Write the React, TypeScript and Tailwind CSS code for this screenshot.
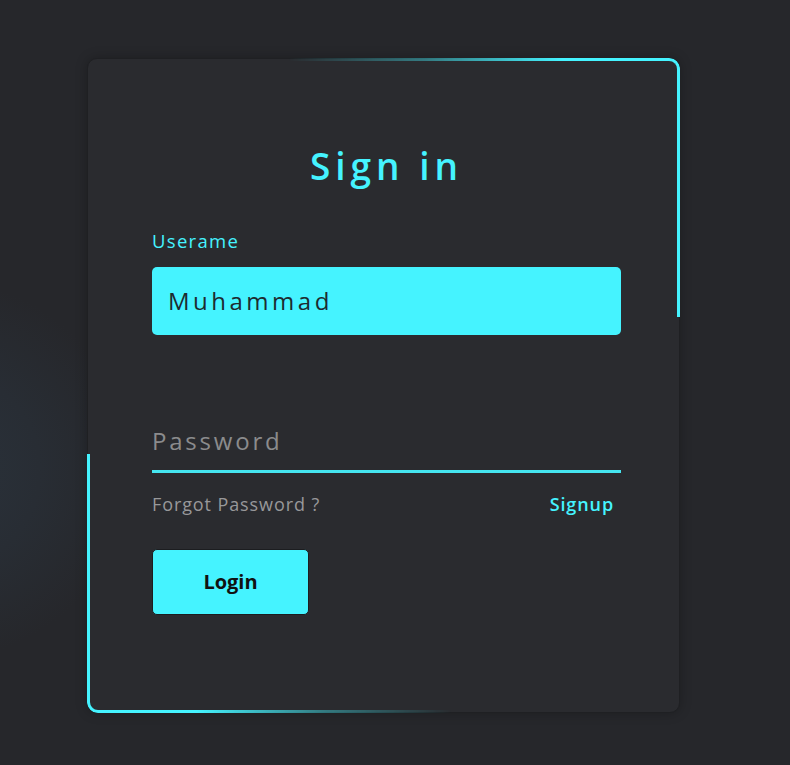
import React, { useState } from 'react';

const font = { fontFamily: '"Open Sans", "Noto Sans", sans-serif' };

export default function App() {
  const [username, setUsername] = useState('Muhammad');
  const [password, setPassword] = useState('');

  return (
    <div
      className="min-h-[765px] w-full bg-[#26272b] bg-[radial-gradient(circle_at_-60px_470px,#2a323b_0px,#282d34_100px,transparent_190px)] pt-[58px] pl-[87px]"
      style={font}
    >
      <div className="relative w-[593px] h-[655px] rounded-[10px] bg-[#2a2b2f] border border-[#1f2023] shadow-[0_0_12px_rgba(0,0,0,0.25)]">
        {/* glowing corner borders */}
        <div className="pointer-events-none absolute -top-px -right-px w-[392px] h-[259px] rounded-tr-[11px] border-t-[3px] border-r-[3px] border-[#45f3ff] [mask-image:linear-gradient(to_right,transparent_0%,rgba(0,0,0,0.4)_35%,black_70%)]" />
        <div className="pointer-events-none absolute -bottom-px -left-px w-[365px] h-[259px] rounded-bl-[11px] border-b-[3px] border-l-[3px] border-[#45f3ff] [mask-image:linear-gradient(to_left,transparent_0%,rgba(0,0,0,0.4)_35%,black_70%)]" />

        <form className="relative flex flex-col pl-[64px] pr-[58px] pt-[88px]" onSubmit={(e) => e.preventDefault()}>
          <h2 className="text-center text-[37px] leading-none font-semibold tracking-[5px] text-[#45f3ff]">
            Sign in
          </h2>

          <label className="mt-[48px] text-[18.5px] leading-none font-medium tracking-[1.3px] text-[#45f3ff]">
            Userame
          </label>
          <input
            value={username}
            onChange={(e) => setUsername(e.target.value)}
            className="mt-[16px] h-[68px] w-full rounded-[5px] bg-[#45f3ff] px-[16px] text-[24px] tracking-[3.5px] text-[#1d2b30] outline-none"
          />

          <div className="mt-[85px] border-b-[3px] border-[#45e6f0] pb-[8px]">
            <input
              type="password"
              value={password}
              placeholder="Password"
              onChange={(e) => setPassword(e.target.value)}
              className="h-[42px] w-full bg-transparent text-[24px] tracking-[2.8px] text-[#ddd] placeholder:text-[#8b8b8d] outline-none"
            />
          </div>

          <div className="mt-[21px] flex items-center justify-between pr-[7px] text-[18px] leading-[20px] tracking-[0.9px]">
            <a href="#" className="text-[#98989a]">Forgot Password ?</a>
            <a href="#" className="font-semibold text-[#45f3ff]">Signup</a>
          </div>

          <button
            type="submit"
            className="mt-[35px] h-[66px] w-[157px] rounded-[5px] bg-[#45f3ff] text-[20px] font-bold text-[#111] border border-[#1c1d20]"
          >
            Login
          </button>
        </form>
      </div>
    </div>
  );
}
